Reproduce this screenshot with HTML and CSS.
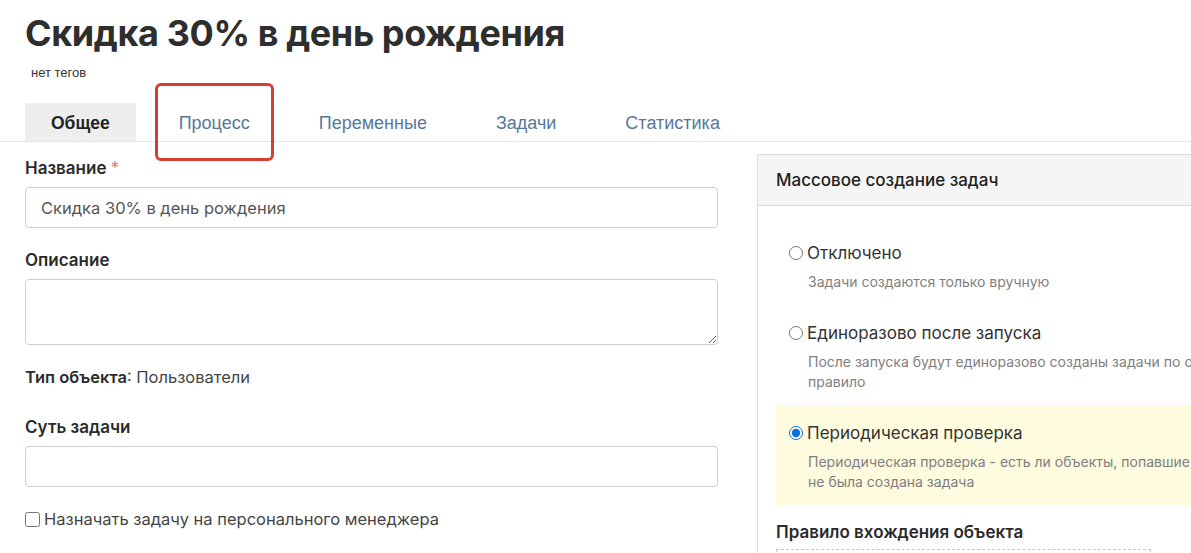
FILE: index.html
```html
<!DOCTYPE html>
<html lang="ru">
<head>
    <meta charset="UTF-8">
    <meta name="viewport" content="width=device-width, initial-scale=1.0">
    <title>Скидка 30% в день рождения</title>
    <link rel="stylesheet" href="styles.css">
</head>
<body>
    <div class="page">
        <h1 class="title">Скидка 30% в день рождения</h1>
        <div class="tags">нет тегов</div>
    </div>

    <div class="tabs-row">
        <div class="tabs">
            <a class="tab active">Общее</a>
            <a class="tab">Процесс</a>
            <a class="tab">Переменные</a>
            <a class="tab">Задачи</a>
            <a class="tab">Статистика</a>
            <div class="highlight"></div>
        </div>
    </div>

    <div class="content">
        <div class="main-col">
            <div class="form-group">
                <label class="field-label">Название <span class="required">*</span></label>
                <input type="text" class="field" value="Скидка 30% в день рождения">
            </div>

            <div class="form-group">
                <label class="field-label">Описание</label>
                <textarea class="field area"></textarea>
            </div>

            <div class="object-type"><b>Тип объекта</b>: Пользователи</div>

            <div class="form-group">
                <label class="field-label">Суть задачи</label>
                <input type="text" class="field">
            </div>

            <label class="check-row">
                <input type="checkbox">
                <span>Назначать задачу на персонального менеджера</span>
            </label>
        </div>

        <div class="side-col">
            <div class="panel">
                <div class="panel-header">Массовое создание задач</div>
                <div class="panel-body">
                    <div class="option">
                        <label class="option-title"><input type="radio" name="mode">Отключено</label>
                        <div class="option-desc">Задачи создаются только вручную</div>
                    </div>
                    <div class="option">
                        <label class="option-title"><input type="radio" name="mode">Единоразово после запуска</label>
                        <div class="option-desc">После запуска будут единоразово созданы задачи по объектам, попадающим в правило</div>
                    </div>
                    <div class="option selected">
                        <label class="option-title"><input type="radio" name="mode" checked>Периодическая проверка</label>
                        <div class="option-desc">Периодическая проверка - есть ли объекты, попавшие под правило, для которых еще не была создана задача</div>
                    </div>

                    <h3 class="rule-title">Правило вхождения объекта</h3>
                    <div class="rule-box"></div>
                </div>
            </div>
        </div>
    </div>
</body>
</html>
```

FILE: styles.css
```css
* {
    margin: 0;
    padding: 0;
    box-sizing: border-box;
}

html, body {
    overflow: hidden;
}

body {
    font-family: Inter, "Noto Sans", sans-serif;
    color: #333;
    background: #fff;
    width: 1191px;
    height: 553px;
}

.page {
    padding: 10px 25px 0;
}

.title {
    font-size: 36px;
    line-height: 46px;
    font-weight: 700;
    color: #2e2e2e;
    letter-spacing: -0.4px;
}

.tags {
    font-family: "Liberation Sans", Arial, sans-serif;
    font-size: 13px;
    line-height: 16px;
    color: #333;
    margin: 9px 0 0 6px;
}

/* вкладки */
.tabs-row {
    margin-top: 22px;
    border-bottom: 1px solid #e6e6e6;
    padding-left: 25px;
}

.tabs {
    position: relative;
    display: flex;
    gap: 17px;
}

.tab {
    font-family: "Liberation Sans", Arial, sans-serif;
    font-size: 18px;
    height: 38px;
    line-height: 40px;
    padding: 0 26px;
    color: #56789a;
    cursor: pointer;
}

.tab.active {
    background: #eeeeee;
    color: #222;
    font-weight: bold;
    font-size: 17.5px;
}

.highlight {
    position: absolute;
    left: 130px;
    top: -20px;
    width: 119px;
    height: 78px;
    border: 3px solid #d83d34;
    border-radius: 6px;
}

/* основная часть */
.content {
    display: grid;
    grid-template-columns: 693px 672px;
    column-gap: 39px;
    padding-left: 25px;
}

.main-col {
    padding-top: 15px;
}

.form-group {
    margin-bottom: 21px;
}

.field-label {
    display: block;
    font-size: 17px;
    font-weight: 600;
    line-height: 22px;
    margin-bottom: 8px;
    color: #2b2b2b;
}

.required {
    color: #e8796b;
    font-weight: 400;
}

.field {
    display: block;
    width: 100%;
    height: 41px;
    border: 1px solid #cfcfcf;
    border-radius: 4px;
    padding: 0 15px;
    font-family: Inter, "Noto Sans", sans-serif;
    font-size: 16.5px;
    color: #555;
    background: #fff;
}

.field.area {
    height: 66px;
    resize: vertical;
}

.object-type {
    font-size: 16.5px;
    line-height: 22px;
    color: #444;
    margin: 2px 0 28px;
}

.object-type b {
    font-weight: 600;
    color: #2b2b2b;
}

.check-row {
    display: flex;
    align-items: center;
    gap: 4px;
    font-size: 16.5px;
    line-height: 22px;
    color: #444;
    margin-top: 4px;
}

.check-row input {
    width: 15px;
    height: 15px;
    margin: 0;
}

/* правая панель */
.side-col {
    padding-top: 12px;
}

.panel {
    border-left: 1px solid #dddddd;
    height: 420px;
}

.panel-header {
    height: 52px;
    background: #f5f5f5;
    border-top: 1px solid #dddddd;
    border-bottom: 1px solid #dddddd;
    padding-left: 18px;
    font-size: 17px;
    font-weight: 500;
    line-height: 50px;
    color: #222;
}

.panel-body {
    padding: 19px 0 0 18px;
}

.option {
    padding: 16px 13px 13px;
}

.option.selected {
    background: #fefbdf;
}

.option-title {
    display: flex;
    align-items: center;
    gap: 4px;
    font-size: 17px;
    line-height: 24px;
    color: #333;
}

.option-title input {
    width: 14px;
    height: 14px;
    margin: 0;
    accent-color: #0b6fe0;
}

.option-desc {
    margin: 7px 0 0 19px;
    font-size: 14px;
    line-height: 20px;
    color: #808080;
}

.rule-title {
    margin-top: 16px;
    font-size: 17px;
    font-weight: 600;
    line-height: 22px;
    color: #2b2b2b;
}

.rule-box {
    margin-top: 6px;
    width: 375px;
    height: 40px;
    border: 1px dashed #c8c8c8;
}
```
